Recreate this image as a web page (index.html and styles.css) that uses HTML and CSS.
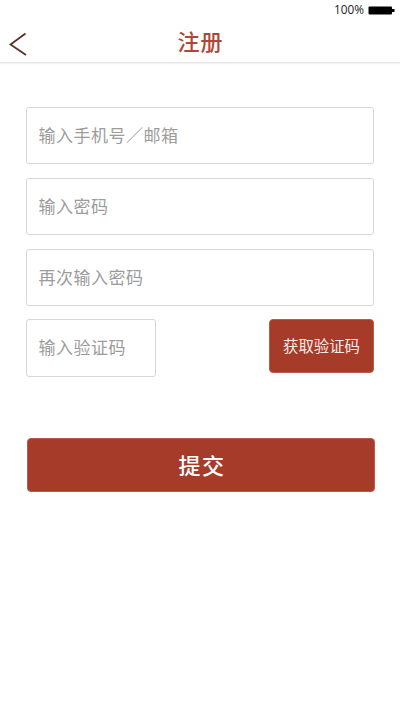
FILE: index.html
```html
<!DOCTYPE html>
<html lang="zh-CN">
<head>
<meta charset="utf-8">
<title>注册</title>
<link rel="stylesheet" href="styles.css">
</head>
<body>
<div class="status"><span>100%</span>
<svg class="battery" width="28" height="9" viewBox="0 0 28 9"><rect x="0.5" y="0.5" width="23.5" height="8" rx="1"/><path d="M24 3h2.5v3H24z"/></svg></div>
<header class="bar">
<svg class="back" width="18" height="24" viewBox="0 0 18 24"><path d="M16.5 1.5L1.5 12.5L17 23"/></svg>
<h1>注册</h1>
</header>
<form class="form">
<div class="field">输入手机号／邮箱</div>
<div class="field">输入密码</div>
<div class="field">再次输入密码</div>
<div class="row">
<div class="field short">输入验证码</div>
<button type="button" class="btn code">获取验证码</button>
</div>
<button type="button" class="btn submit">提交</button>
</form>
</body>
</html>
```

FILE: styles.css
```css
* { box-sizing: border-box; }
body { margin: 0; height: 712px; background: #fff; font-family: "Liberation Sans", "Noto Sans CJK SC", sans-serif; }
.status { height: 20px; display: flex; justify-content: flex-end; align-items: center; gap: 4px; padding-right: 4px; font-family: "Open Sans", sans-serif; font-size: 11.8px; color: #222; }
.status span { padding-bottom: 2px; }
.battery { fill: #000; }
.bar { height: 43px; display: grid; grid-template-columns: 50px 1fr 50px; align-items: center; border-bottom: 1px solid #e6e6e6; box-shadow: 0 1px 1px #f3f3f3; }
.back { margin: 6px 0 0 9px; fill: none; stroke: #5c2f26; stroke-width: 1.8; }
.bar h1 { margin: 4px 0 0 1px; text-align: center; font-size: 22px; line-height: 38px; font-weight: 500; color: #b04735; letter-spacing: 1px; }
.form { padding: 44px 26px 0; display: flex; flex-direction: column; gap: 14px; }
.field { height: 57px; border: 1px solid #d6d6d6; border-radius: 3px; padding: 2px 0 0 11.5px; font-size: 17px; line-height: 53px; letter-spacing: .5px; color: #9c9c9c; }
.row { display: flex; justify-content: space-between; margin-top: -1px; }
.short { width: 130px; height: 58px; }
.btn { border: 1px solid #b95a4b; border-radius: 4px; background: #a63b2a; color: #fff; font-family: inherit; padding: 0 0 3px; }
.code { width: 105px; height: 54px; font-size: 15.4px; color: #fbeae7; }
.submit { width: 348px; height: 54px; margin: 47px 0 0 1px; padding-left: 2px; font-size: 22px; font-weight: 500; letter-spacing: 1.5px; }
```
